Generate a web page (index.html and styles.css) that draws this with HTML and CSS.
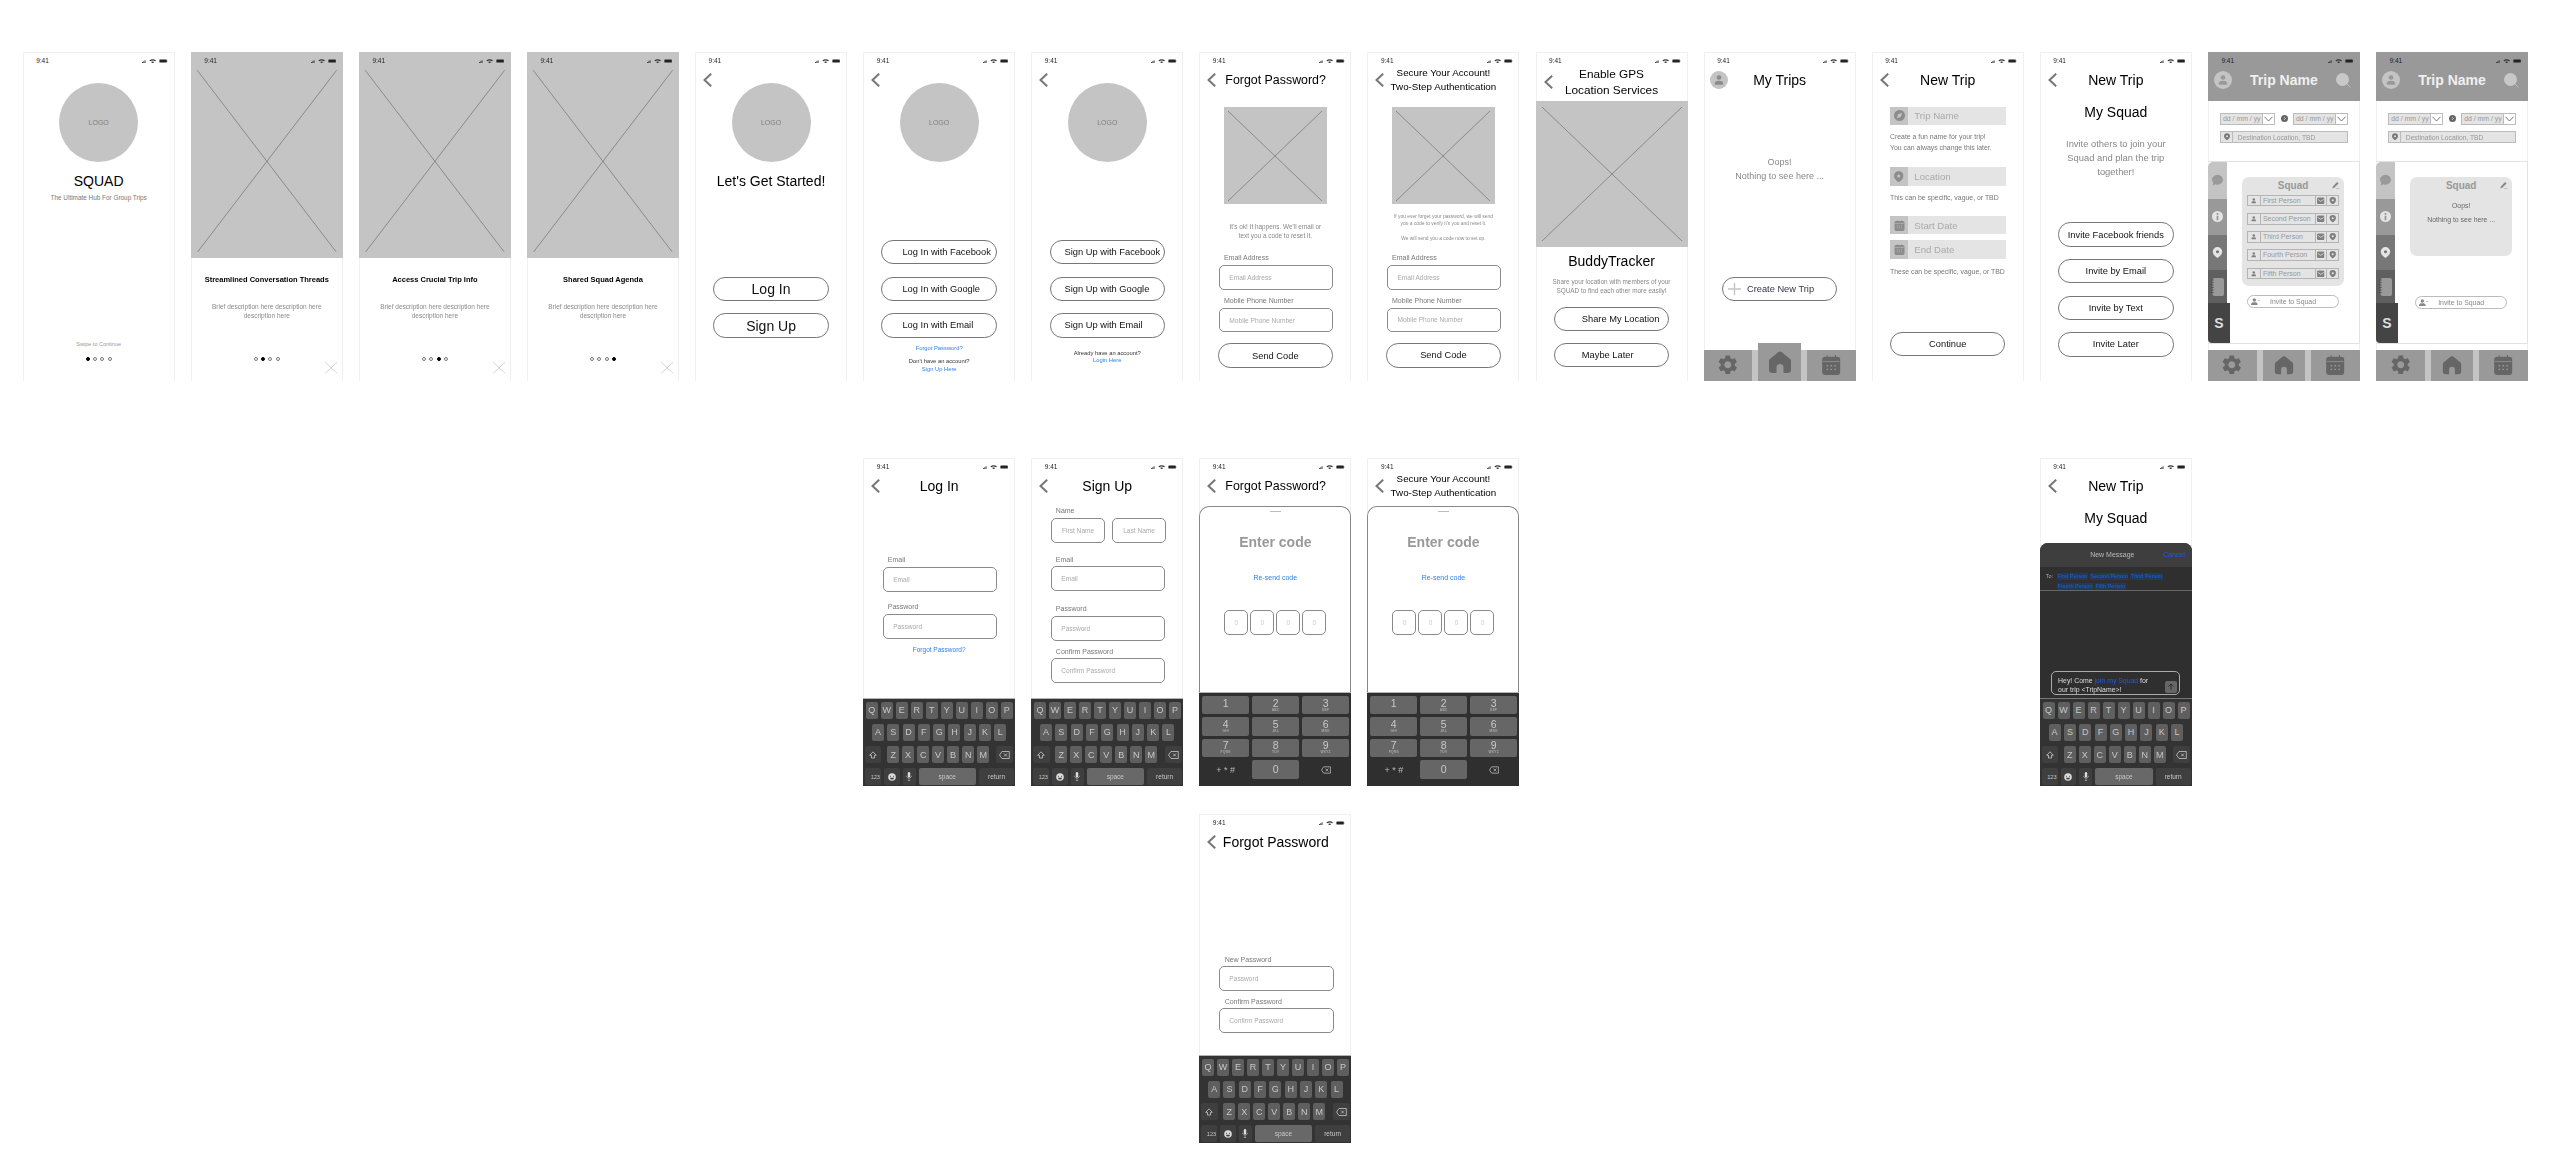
FILE: index.html
```html
<!DOCTYPE html>
<html lang="en">
<head>
    <meta charset="UTF-8">
    <title>Squad wireframes</title>
    <link rel="stylesheet" href="styles.css">
</head>
<body>
    <svg class="sprite" xmlns="http://www.w3.org/2000/svg">
        <symbol id="i-status" viewBox="0 0 25.6 4">
            <path d="M0 2.9h.9V4H0zM1.3 2.2h.9V4h-.9zM2.6 1.2h.9V4h-.9zM3.5 .4" fill="#333"/>
            <path d="M7.4 1.4C9.4-.3 12-.3 14 1.4l-.8.9c-1.500-1.200-3.500-1.200-5 0zM9 3c.9-.7 2.500-.7 3.400 0L10.700 4.200z" fill="#333"/>
            <rect x="17.400" y=".4" width="7.400" height="3.200" rx=".6" fill="#222"/>
            <rect x="25" y="1.400" width=".6" height="1.200" fill="#555"/>
        </symbol>
        <symbol id="i-back" viewBox="0 0 9 14">
            <path d="M8.200 .7 1.500 7l6.700 6.300" fill="none" stroke="#777" stroke-width="2"/>
        </symbol>
        <symbol id="i-cross" viewBox="0 0 100 100" preserveAspectRatio="none">
            <path d="M0 0 100 100M100 0 0 100" fill="none" stroke="#777" stroke-width=".75" vector-effect="non-scaling-stroke"/>
        </symbol>
        <symbol id="i-close" viewBox="0 0 12 12" preserveAspectRatio="none">
            <path d="M0 0 12 12M12 0 0 12" fill="none" stroke="#c8c8c8" stroke-width=".8"/>
        </symbol>
        <symbol id="i-person" viewBox="0 0 18 18">
            <circle cx="9" cy="5.800" r="3"/>
            <path d="M3.500 14c0-3 2.200-4 5.500-4s5.500 1 5.500 4c0 .8-.5 1-1 1H4.500c-.5 0-1-.2-1-1z"/>
        </symbol>
        <symbol id="i-gear" viewBox="2 2 20 20">
            <path d="M19.140 12.940c.04-.3.06-.61.06-.94 0-.32-.02-.64-.07-.94l2.030-1.580c.18-.14.23-.41.12-.61l-1.920-3.320c-.12-.22-.37-.29-.59-.22l-2.390.96c-.5-.38-1.030-.7-1.620-.94l-.36-2.540c-.04-.24-.24-.41-.48-.41h-3.840c-.24 0-.43.17-.47.41l-.36 2.540c-.59.24-1.130.57-1.620.94l-2.390-.96c-.22-.08-.47 0-.59.22L2.740 8.870c-.12.21-.08.47.12.61l2.030 1.580c-.05.3-.09.63-.09.94s.02.64.07.94l-2.030 1.580c-.18.14-.23.41-.12.61l1.920 3.320c.12.22.37.29.59.22l2.390-.96c.5.38 1.030.7 1.620.94l.36 2.540c.05.24.24.41.48.41h3.840c.24 0 .44-.17.47-.41l.36-2.540c.59-.24 1.130-.56 1.620-.94l2.390.96c.22.08.47 0 .59-.22l1.920-3.320c.12-.22.07-.47-.12-.61l-2.010-1.580zM12 15.600c-1.980 0-3.600-1.620-3.600-3.600s1.620-3.600 3.600-3.600 3.600 1.620 3.600 3.600-1.620 3.600-3.600 3.600z"/>
        </symbol>
        <symbol id="i-home" viewBox="0 0 24 24">
            <path d="M12 1.500c-.8 0-1.500.4-2.200 1L2.200 8.800C1.300 9.600 1 10.300 1 11.400V20c0 1.800 1.200 3 3 3h4.500v-5.500a3.500 3.500 0 0 1 7 0V23H20c1.800 0 3-1.200 3-3v-8.600c0-1.100-.3-1.800-1.200-2.600l-7.600-6.300c-.7-.6-1.400-1-2.200-1z"/>
        </symbol>
        <symbol id="i-cal" viewBox="0 0 20 22">
            <path d="M5 0h1v3H5zM14 0h1v3h-1z"/>
            <path fill-rule="evenodd" d="M3.500 2h13A3.500 3.500 0 0 1 20 5.500v13a3.500 3.500 0 0 1-3.500 3.500h-13A3.500 3.500 0 0 1 0 18.500v-13A3.500 3.500 0 0 1 3.500 2zM1 6.500v1h18v-1zM5 11h1.600v1.600H5zM9.200 11h1.600v1.600H9.200zM13.400 11H15v1.600h-1.600zM5 15h1.600v1.600H5zM9.200 15h1.600v1.600H9.200zM13.400 15H15v1.600h-1.600z"/>
        </symbol>
        <symbol id="i-compass" viewBox="0 0 12 12">
            <path fill-rule="evenodd" d="M6 0a6 6 0 1 1 0 12A6 6 0 0 1 6 0zM9 3 4.600 4.600 3 9l4.400-1.600z"/>
        </symbol>
        <symbol id="i-pin" viewBox="0 0 12 14">
            <path fill-rule="evenodd" d="M6 0a6 6 0 0 1 6 6c0 3.500-4 6.800-6 8-2-1.200-6-4.500-6-8a6 6 0 0 1 6-6zm0 4a2 2 0 1 0 0 4 2 2 0 0 0 0-4z"/>
        </symbol>
        <symbol id="i-chat" viewBox="0 0 12 12">
            <path d="M6 0c3.300 0 6 2.300 6 5.300s-2.700 5.300-6 5.300c-.9 0-1.700-.2-2.400-.5L.6 11.500l.9-3C.5 7.600 0 6.500 0 5.300 0 2.300 2.700 0 6 0z"/>
            <path d="M3.200 5h1.100v1H3.200zM5.500 5h1.100v1H5.500zM7.800 5h1.100v1H7.800z" fill="#aaa"/>
        </symbol>
        <symbol id="i-info" viewBox="0 0 12 12">
            <path fill-rule="evenodd" d="M6 0a6 6 0 1 1 0 12A6 6 0 0 1 6 0zM5 2.200v1.800h2V2.200zM5 5.200v4.800h2V5.200z"/>
        </symbol>
        <symbol id="i-notes" viewBox="0 0 13 18">
            <rect x="1.500" width="11.500" height="18" rx="2"/>
            <path d="M0 2h3M0 4.500h3M0 7h3M0 9.500h3M0 12h3M0 14.500h3" stroke="#444" stroke-width=".8" stroke-dasharray="1 .3"/>
        </symbol>
        <symbol id="i-pencil" viewBox="0 0 8 8">
            <path d="M5.800 0 7.500 1.700 2.600 6.600.3 7.400 1 5zM5 7h3v.7H5z"/>
        </symbol>
        <symbol id="i-mail" viewBox="0 0 9 8">
            <path fill-rule="evenodd" d="M1.500 0h6A1.500 1.500 0 0 1 9 1.500v5A1.500 1.500 0 0 1 7.500 8h-6A1.500 1.500 0 0 1 0 6.500v-5A1.500 1.500 0 0 1 1.500 0zM1 1.800l3.500 2.500L8 1.800v1l-3.500 2.500L1 2.800z"/>
        </symbol>
        <symbol id="i-invite" viewBox="0 0 10 8">
            <circle cx="3.700" cy="2" r="1.900"/>
            <path d="M0 7c0-1.800 1.500-2.500 3.700-2.500S7.400 5.200 7.400 7c0 .5-.3.7-.7.7H.7C.3 7.700 0 7.500 0 7zM7.800 2.400H10V3H7.800z"/>
        </symbol>
        <symbol id="i-search" viewBox="0 0 15 15">
            <circle cx="6.500" cy="6.500" r="6.500" fill="#c8c8c8"/>
            <path d="M11 11 14.500 14.500" stroke="#bbb" stroke-width="1"/>
        </symbol>
        <symbol id="i-down" viewBox="0 0 9 6">
            <path d="M.5 .8 4.500 5 8.500 .8" fill="none" stroke="#666" stroke-width=".9"/>
        </symbol>
        <symbol id="i-next" viewBox="0 0 7 7">
            <circle cx="3.500" cy="3.500" r="3.500" fill="#666"/>
            <path d="M2.900 2 4.400 3.500 2.900 5" fill="none" stroke="#ddd" stroke-width=".8"/>
        </symbol>
        <symbol id="i-plus" viewBox="0 0 13 12">
            <path d="M0 6h13M6.500 0v12" stroke="#c4c4c4" stroke-width="1.400"/>
        </symbol>
        <symbol id="i-shift" viewBox="0 0 8 8">
            <path d="M4 .8 7.300 4.300H5.500V7H2.500V4.300H.7z" fill="none" stroke="#ddd" stroke-width=".7"/>
        </symbol>
        <symbol id="i-del" viewBox="0 0 11 8">
            <path d="M3 .5h7.300v7H3L.5 4zM5 2.500l3 3M8 2.500l-3 3" fill="none" stroke="#ddd" stroke-width=".7"/>
        </symbol>
        <symbol id="i-emoji" viewBox="0 0 8 8">
            <circle cx="4" cy="4" r="3.800" fill="#ddd"/>
            <path d="M2 2.700h1v1H2zM5 2.700h1v1H5zM2 4.700h4C5.800 6 5 6.500 4 6.500S2.200 6 2 4.700z" fill="#444"/>
        </symbol>
        <symbol id="i-mic" viewBox="0 0 6 9">
            <rect x="1.800" width="2.400" height="5.400" rx="1.200" fill="#ddd"/>
            <path d="M.5 3.800c0 3 5 3 5 0M3 6.200V9M1.800 8.700h2.400" fill="none" stroke="#ddd" stroke-width=".5"/>
        </symbol>
        <symbol id="i-up" viewBox="0 0 8 8">
            <path d="M4 7V1M1.500 3.500 4 1l2.500 2.500" fill="none" stroke="#222" stroke-width=".8"/>
        </symbol>
    </svg>

    <main class="board">
        <!-- top row -->
        <section class="phone">
            <div class="status"><span>9:41</span><svg><use href="#i-status"/></svg></div>
            <div class="logo">LOGO</div>
            <h1 class="big mt-11">SQUAD</h1>
            <p class="tagline mt-5_5">The Ultimate Hub For Group Trips</p>
            <p class="swipe mt-138">Swipe to Continue</p>
            <div class="dots mt-9"><i class="on"></i><i></i><i></i><i></i></div>
        </section>

        <section class="phone">
            <div class="cover">
                <div class="status"><span>9:41</span><svg><use href="#i-status"/></svg></div>
                <svg class="cover-cross"><use href="#i-cross"/></svg>
            </div>
            <h2 class="slide-title">Streamlined Conversation Threads</h2>
            <p class="slide-text">Brief description here description here<br>description here</p>
            <div class="dots mt-37"><i></i><i class="on"></i><i></i><i></i></div>
            <svg class="skip"><use href="#i-close"/></svg>
        </section>

        <section class="phone">
            <div class="cover">
                <div class="status"><span>9:41</span><svg><use href="#i-status"/></svg></div>
                <svg class="cover-cross"><use href="#i-cross"/></svg>
            </div>
            <h2 class="slide-title">Access Crucial Trip Info</h2>
            <p class="slide-text">Brief description here description here<br>description here</p>
            <div class="dots mt-37"><i></i><i></i><i class="on"></i><i></i></div>
            <svg class="skip"><use href="#i-close"/></svg>
        </section>

        <section class="phone">
            <div class="cover">
                <div class="status"><span>9:41</span><svg><use href="#i-status"/></svg></div>
                <svg class="cover-cross"><use href="#i-cross"/></svg>
            </div>
            <h2 class="slide-title">Shared Squad Agenda</h2>
            <p class="slide-text">Brief description here description here<br>description here</p>
            <div class="dots mt-37"><i></i><i></i><i></i><i class="on"></i></div>
            <svg class="skip"><use href="#i-close"/></svg>
        </section>

        <section class="phone">
            <div class="status"><span>9:41</span><svg><use href="#i-status"/></svg></div>
            <div class="nav"><svg class="back"><use href="#i-back"/></svg></div>
            <div class="logo">LOGO</div>
            <h1 class="big mt-11">Let's Get Started!</h1>
            <div class="stack mt-88">
                <a class="btn btn-lg">Log In</a>
                <a class="btn btn-lg">Sign Up</a>
            </div>
        </section>

        <section class="phone">
            <div class="status"><span>9:41</span><svg><use href="#i-status"/></svg></div>
            <div class="nav"><svg class="back"><use href="#i-back"/></svg></div>
            <div class="logo">LOGO</div>
            <div class="stack mt-78_5">
                <a class="btn pad-20">Log In with Facebook</a>
                <a class="btn pad-20">Log In with Google</a>
                <a class="btn pad-20">Log In with Email</a>
            </div>
            <p class="link mt-7_5">Forgot Password?</p>
            <p class="small mt-6">Don't have an account?</p>
            <p class="link">Sign Up Here</p>
        </section>

        <section class="phone">
            <div class="status"><span>9:41</span><svg><use href="#i-status"/></svg></div>
            <div class="nav"><svg class="back"><use href="#i-back"/></svg></div>
            <div class="logo">LOGO</div>
            <div class="stack mt-78_5">
                <a class="btn pad-14">Sign Up with Facebook</a>
                <a class="btn pad-14">Sign Up with Google</a>
                <a class="btn pad-14">Sign Up with Email</a>
            </div>
            <p class="small mt-12">Already have an account?</p>
            <p class="link">Login Here</p>
        </section>

        <section class="phone">
            <div class="status"><span>9:41</span><svg><use href="#i-status"/></svg></div>
            <div class="nav nav-left"><svg class="back"><use href="#i-back"/></svg><h1 class="title title-sm">Forgot Password?</h1></div>
            <div class="shot mt-13"><svg><use href="#i-cross"/></svg></div>
            <p class="note mt-18">It's ok! It happens. We'll email or<br>text you a code to reset it.</p>
            <p class="label mt-14">Email Address</p>
            <div class="input mt-3">Email Address</div>
            <p class="label mt-7">Mobile Phone Number</p>
            <div class="input mt-3">Mobile Phone Number</div>
            <a class="btn btn-mid mt-11">Send Code</a>
        </section>

        <section class="phone">
            <div class="status"><span>9:41</span><svg><use href="#i-status"/></svg></div>
            <div class="nav"><svg class="back"><use href="#i-back"/></svg><h1 class="title title-two">Secure Your Account!<br>Two-Step Authentication</h1></div>
            <div class="shot mt-13"><svg><use href="#i-cross"/></svg></div>
            <p class="fine mt-9">If you ever forget your password, we will send<br>you a code to verify it's you and reset it.</p>
            <p class="fine mt-7_5">We will send you a code now to set up.</p>
            <p class="label mt-11_5">Email Address</p>
            <div class="input mt-3">Email Address</div>
            <p class="label mt-7">Mobile Phone Number</p>
            <div class="input mt-3">Mobile Phone Number</div>
            <a class="btn btn-mid mt-11">Send Code</a>
        </section>

        <section class="phone">
            <div class="status"><span>9:41</span><svg><use href="#i-status"/></svg></div>
            <div class="nav"><svg class="back"><use href="#i-back"/></svg><h1 class="title title-gps">Enable GPS<br>Location Services</h1></div>
            <div class="shot shot-wide mt-6_5"><svg><use href="#i-cross"/></svg></div>
            <h2 class="big mt-6_5">BuddyTracker</h2>
            <p class="note mt-7_5">Share your location with members of your<br>SQUAD to find each other more easily!</p>
            <div class="stack mt-12">
                <a class="btn pad-27">Share My Location</a>
                <a class="btn pad-27">Maybe Later</a>
            </div>
        </section>

        <section class="phone">
            <div class="status"><span>9:41</span><svg><use href="#i-status"/></svg></div>
            <div class="nav nav-avatar"><div class="avatar"><svg><use href="#i-person"/></svg></div><h1 class="title">My Trips</h1></div>
            <p class="empty mt-61">Oops!<br>Nothing to see here ...</p>
            <a class="btn btn-add mt-94"><svg><use href="#i-plus"/></svg>Create New Trip</a>
            <div class="tabs mt-48">
                <div class="tab tab-gear"><svg><use href="#i-gear"/></svg></div>
                <div class="tab tab-home raised"><svg><use href="#i-home"/></svg></div>
                <div class="tab tab-cal"><svg><use href="#i-cal"/></svg></div>
            </div>
        </section>

        <section class="phone">
            <div class="status"><span>9:41</span><svg><use href="#i-status"/></svg></div>
            <div class="nav"><svg class="back"><use href="#i-back"/></svg><h1 class="title">New Trip</h1></div>
            <div class="trip-field mt-12_5"><span><svg><use href="#i-compass"/></svg></span>Trip Name</div>
            <p class="hint mt-6">Create a fun name for your trip!<br>You can always change this later.</p>
            <div class="trip-field mt-14"><span><svg class="pin"><use href="#i-pin"/></svg></span>Location</div>
            <p class="hint mt-6">This can be specific, vague, or TBD</p>
            <div class="trip-field mt-13"><span><svg><use href="#i-cal"/></svg></span>Start Date</div>
            <div class="trip-field mt-6"><span><svg><use href="#i-cal"/></svg></span>End Date</div>
            <p class="hint mt-7">These can be specific, vague, or TBD</p>
            <a class="btn btn-mid mt-55">Continue</a>
        </section>

        <section class="phone">
            <div class="status"><span>9:41</span><svg><use href="#i-status"/></svg></div>
            <div class="nav"><svg class="back"><use href="#i-back"/></svg><h1 class="title">New Trip</h1></div>
            <h2 class="big mt-10">My Squad</h2>
            <p class="invite-copy mt-17">Invite others to join your<br>Squad and plan the trip<br>together!</p>
            <div class="stack mt-44">
                <a class="btn btn-mid">Invite Facebook friends</a>
                <a class="btn btn-mid">Invite by Email</a>
                <a class="btn btn-mid">Invite by Text</a>
                <a class="btn btn-mid">Invite Later</a>
            </div>
        </section>

        <section class="phone">
            <div class="trip-head">
                <div class="status"><span>9:41</span><svg><use href="#i-status"/></svg></div>
                <div class="nav nav-avatar">
                    <div class="avatar avatar-head"><svg><use href="#i-person"/></svg></div>
                    <h1 class="title title-bold">Trip Name</h1>
                    <svg class="search"><use href="#i-search"/></svg>
                </div>
            </div>
            <div class="dates">
                <div class="date"><p>dd / mm / yy</p><span><svg><use href="#i-down"/></svg></span></div>
                <svg class="next"><use href="#i-next"/></svg>
                <div class="date"><p>dd / mm / yy</p><span><svg><use href="#i-down"/></svg></span></div>
            </div>
            <div class="dest"><span><svg><use href="#i-pin"/></svg></span>Destination Location, TBD</div>
            <div class="panel">
                <div class="side">
                    <div class="side-tab s1"><svg><use href="#i-chat"/></svg></div>
                    <div class="side-tab s2"><svg><use href="#i-info"/></svg></div>
                    <div class="side-tab s3"><svg><use href="#i-pin"/></svg></div>
                    <div class="side-tab s4"><svg class="notes"><use href="#i-notes"/></svg></div>
                    <div class="side-tab s5">S</div>
                </div>
                <div class="squad">
                    <div class="card">
                        <div class="card-head"><h3>Squad</h3><svg><use href="#i-pencil"/></svg></div>
                        <div class="member"><span class="m-ico"><svg><use href="#i-person"/></svg></span><span class="m-name">First Person</span><span class="m-ico"><svg><use href="#i-mail"/></svg></span><span class="m-ico"><svg><use href="#i-pin"/></svg></span></div>
                        <div class="member"><span class="m-ico"><svg><use href="#i-person"/></svg></span><span class="m-name">Second Person</span><span class="m-ico"><svg><use href="#i-mail"/></svg></span><span class="m-ico"><svg><use href="#i-pin"/></svg></span></div>
                        <div class="member"><span class="m-ico"><svg><use href="#i-person"/></svg></span><span class="m-name">Third Person</span><span class="m-ico"><svg><use href="#i-mail"/></svg></span><span class="m-ico"><svg><use href="#i-pin"/></svg></span></div>
                        <div class="member"><span class="m-ico"><svg><use href="#i-person"/></svg></span><span class="m-name">Fourth Person</span><span class="m-ico"><svg><use href="#i-mail"/></svg></span><span class="m-ico"><svg><use href="#i-pin"/></svg></span></div>
                        <div class="member"><span class="m-ico"><svg><use href="#i-person"/></svg></span><span class="m-name">Fifth Person</span><span class="m-ico"><svg><use href="#i-mail"/></svg></span><span class="m-ico"><svg><use href="#i-pin"/></svg></span></div>
                    </div>
                    <div class="invite-pill mt-9_5"><svg><use href="#i-invite"/></svg><span>Invite to Squad</span></div>
                </div>
            </div>
            <div class="tabs mt-6">
                <div class="tab tab-gear"><svg><use href="#i-gear"/></svg></div>
                <div class="tab tab-home"><svg><use href="#i-home"/></svg></div>
                <div class="tab tab-cal"><svg><use href="#i-cal"/></svg></div>
            </div>
        </section>

        <section class="phone">
            <div class="trip-head">
                <div class="status"><span>9:41</span><svg><use href="#i-status"/></svg></div>
                <div class="nav nav-avatar">
                    <div class="avatar avatar-head"><svg><use href="#i-person"/></svg></div>
                    <h1 class="title title-bold">Trip Name</h1>
                    <svg class="search"><use href="#i-search"/></svg>
                </div>
            </div>
            <div class="dates">
                <div class="date"><p>dd / mm / yy</p><span><svg><use href="#i-down"/></svg></span></div>
                <svg class="next"><use href="#i-next"/></svg>
                <div class="date"><p>dd / mm / yy</p><span><svg><use href="#i-down"/></svg></span></div>
            </div>
            <div class="dest"><span><svg><use href="#i-pin"/></svg></span>Destination Location, TBD</div>
            <div class="panel">
                <div class="side">
                    <div class="side-tab s1"><svg><use href="#i-chat"/></svg></div>
                    <div class="side-tab s2"><svg><use href="#i-info"/></svg></div>
                    <div class="side-tab s3"><svg><use href="#i-pin"/></svg></div>
                    <div class="side-tab s4"><svg class="notes"><use href="#i-notes"/></svg></div>
                    <div class="side-tab s5">S</div>
                </div>
                <div class="squad">
                    <div class="card card-empty">
                        <div class="card-head"><h3>Squad</h3><svg><use href="#i-pencil"/></svg></div>
                        <p class="card-oops">Oops!<br>Nothing to see here ...</p>
                    </div>
                    <div class="invite-pill mt-40"><svg><use href="#i-invite"/></svg><span>Invite to Squad</span></div>
                </div>
            </div>
            <div class="tabs mt-6">
                <div class="tab tab-gear"><svg><use href="#i-gear"/></svg></div>
                <div class="tab tab-home"><svg><use href="#i-home"/></svg></div>
                <div class="tab tab-cal"><svg><use href="#i-cal"/></svg></div>
            </div>
        </section>

        <!-- second row -->
        <section class="phone short at-6">
            <div class="status"><span>9:41</span><svg><use href="#i-status"/></svg></div>
            <div class="nav"><svg class="back"><use href="#i-back"/></svg><h1 class="title">Log In</h1></div>
            <p class="label mt-56">Email</p>
            <div class="input mt-2_5 tall">Email</div>
            <p class="label mt-11">Password</p>
            <div class="input mt-3 tall">Password</div>
            <p class="link link-md mt-7_5">Forgot Password?</p>
            <div class="kb">
                <div class="kb-row"><b>Q</b><b>W</b><b>E</b><b>R</b><b>T</b><b>Y</b><b>U</b><b>I</b><b>O</b><b>P</b></div>
                <div class="kb-row kb-mid"><b>A</b><b>S</b><b>D</b><b>F</b><b>G</b><b>H</b><b>J</b><b>K</b><b>L</b></div>
                <div class="kb-row kb-shift"><b class="dark wide"><svg class="k-shift"><use href="#i-shift"/></svg></b><b>Z</b><b>X</b><b>C</b><b>V</b><b>B</b><b>N</b><b>M</b><b class="dark wide del"><svg class="k-del"><use href="#i-del"/></svg></b></div>
                <div class="kb-row kb-bottom"><b class="dark k123">123</b><b class="dark k-e"><svg><use href="#i-emoji"/></svg></b><b class="dark k-m"><svg><use href="#i-mic"/></svg></b><b class="space">space</b><b class="dark ret">return</b></div>
            </div>
        </section>

        <section class="phone short at-7">
            <div class="status"><span>9:41</span><svg><use href="#i-status"/></svg></div>
            <div class="nav"><svg class="back"><use href="#i-back"/></svg><h1 class="title">Sign Up</h1></div>
            <p class="label mt-7">Name</p>
            <div class="names mt-2_5">
                <div class="input tall">First Name</div>
                <div class="input tall">Last Name</div>
            </div>
            <p class="label mt-13">Email</p>
            <div class="input mt-2_5 tall">Email</div>
            <p class="label mt-14">Password</p>
            <div class="input mt-3 tall">Password</div>
            <p class="label mt-7">Confirm Password</p>
            <div class="input mt-2 tall">Confirm Password</div>
            <div class="kb">
                <div class="kb-row"><b>Q</b><b>W</b><b>E</b><b>R</b><b>T</b><b>Y</b><b>U</b><b>I</b><b>O</b><b>P</b></div>
                <div class="kb-row kb-mid"><b>A</b><b>S</b><b>D</b><b>F</b><b>G</b><b>H</b><b>J</b><b>K</b><b>L</b></div>
                <div class="kb-row kb-shift"><b class="dark wide"><svg class="k-shift"><use href="#i-shift"/></svg></b><b>Z</b><b>X</b><b>C</b><b>V</b><b>B</b><b>N</b><b>M</b><b class="dark wide del"><svg class="k-del"><use href="#i-del"/></svg></b></div>
                <div class="kb-row kb-bottom"><b class="dark k123">123</b><b class="dark k-e"><svg><use href="#i-emoji"/></svg></b><b class="dark k-m"><svg><use href="#i-mic"/></svg></b><b class="space">space</b><b class="dark ret">return</b></div>
            </div>
        </section>

        <section class="phone short at-8">
            <div class="status"><span>9:41</span><svg><use href="#i-status"/></svg></div>
            <div class="nav nav-left"><svg class="back"><use href="#i-back"/></svg><h1 class="title title-sm">Forgot Password?</h1></div>
            <div class="sheet">
                <i class="handle"></i>
                <h2 class="enter">Enter code</h2>
                <p class="link link-lg">Re-send code</p>
                <div class="code"><span>0</span><span>0</span><span>0</span><span>0</span></div>
            </div>
            <div class="numpad">
                <b>1</b><b>2<small>ABC</small></b><b>3<small>DEF</small></b>
                <b>4<small>GHI</small></b><b>5<small>JKL</small></b><b>6<small>MNO</small></b>
                <b>7<small>PQRS</small></b><b>8<small>TUV</small></b><b>9<small>WXYZ</small></b>
                <em>+ * #</em><b class="zero">0</b><em><svg><use href="#i-del"/></svg></em>
            </div>
        </section>

        <section class="phone short at-9">
            <div class="status"><span>9:41</span><svg><use href="#i-status"/></svg></div>
            <div class="nav"><svg class="back"><use href="#i-back"/></svg><h1 class="title title-two">Secure Your Account!<br>Two-Step Authentication</h1></div>
            <div class="sheet">
                <i class="handle"></i>
                <h2 class="enter">Enter code</h2>
                <p class="link link-lg">Re-send code</p>
                <div class="code"><span>0</span><span>0</span><span>0</span><span>0</span></div>
            </div>
            <div class="numpad">
                <b>1</b><b>2<small>ABC</small></b><b>3<small>DEF</small></b>
                <b>4<small>GHI</small></b><b>5<small>JKL</small></b><b>6<small>MNO</small></b>
                <b>7<small>PQRS</small></b><b>8<small>TUV</small></b><b>9<small>WXYZ</small></b>
                <em>+ * #</em><b class="zero">0</b><em><svg><use href="#i-del"/></svg></em>
            </div>
        </section>

        <section class="phone short at-13">
            <div class="status"><span>9:41</span><svg><use href="#i-status"/></svg></div>
            <div class="nav"><svg class="back"><use href="#i-back"/></svg><h1 class="title">New Trip</h1></div>
            <h2 class="big mt-10">My Squad</h2>
            <div class="compose">
                <div class="compose-head"><span>New Message</span><a>Cancel</a></div>
                <div class="to">
                    <span class="to-label">To:</span>
                    <div class="chips"><span>First Person</span><span>Second Person</span><span>Third Person</span><span>Fourth Person</span><span>Fifth Person</span></div>
                </div>
                <div class="bubble">
                    <p>Hey! Come <a>join my Squad</a> for<br>our trip &lt;TripName&gt;!</p>
                    <span class="bubble-send"><svg><use href="#i-up"/></svg></span>
                </div>
            </div>
            <div class="kb kb-flat">
                <div class="kb-row"><b>Q</b><b>W</b><b>E</b><b>R</b><b>T</b><b>Y</b><b>U</b><b>I</b><b>O</b><b>P</b></div>
                <div class="kb-row kb-mid"><b>A</b><b>S</b><b>D</b><b>F</b><b>G</b><b>H</b><b>J</b><b>K</b><b>L</b></div>
                <div class="kb-row kb-shift"><b class="dark wide"><svg class="k-shift"><use href="#i-shift"/></svg></b><b>Z</b><b>X</b><b>C</b><b>V</b><b>B</b><b>N</b><b>M</b><b class="dark wide del"><svg class="k-del"><use href="#i-del"/></svg></b></div>
                <div class="kb-row kb-bottom"><b class="dark k123">123</b><b class="dark k-e"><svg><use href="#i-emoji"/></svg></b><b class="dark k-m"><svg><use href="#i-mic"/></svg></b><b class="space">space</b><b class="dark ret">return</b></div>
            </div>
        </section>

        <!-- third row -->
        <section class="phone at-8b">
            <div class="status"><span>9:41</span><svg><use href="#i-status"/></svg></div>
            <div class="nav nav-left nav-tight"><svg class="back"><use href="#i-back"/></svg><h1 class="title">Forgot Password</h1></div>
            <p class="label label-wide mt-99_5">New Password</p>
            <div class="input mt-2_5 input-wide">Password</div>
            <p class="label label-wide mt-7">Confirm Password</p>
            <div class="input mt-1_5 input-wide">Confirm Password</div>
            <div class="kb">
                <div class="kb-row"><b>Q</b><b>W</b><b>E</b><b>R</b><b>T</b><b>Y</b><b>U</b><b>I</b><b>O</b><b>P</b></div>
                <div class="kb-row kb-mid"><b>A</b><b>S</b><b>D</b><b>F</b><b>G</b><b>H</b><b>J</b><b>K</b><b>L</b></div>
                <div class="kb-row kb-shift"><b class="dark wide"><svg class="k-shift"><use href="#i-shift"/></svg></b><b>Z</b><b>X</b><b>C</b><b>V</b><b>B</b><b>N</b><b>M</b><b class="dark wide del"><svg class="k-del"><use href="#i-del"/></svg></b></div>
                <div class="kb-row kb-bottom"><b class="dark k123">123</b><b class="dark k-e"><svg><use href="#i-emoji"/></svg></b><b class="dark k-m"><svg><use href="#i-mic"/></svg></b><b class="space">space</b><b class="dark ret">return</b></div>
            </div>
        </section>
    </main>
</body>
</html>
```
FILE: styles.css
```css
* {
    box-sizing: border-box;
}

body {
    margin: 0;
    background-color: #fff;
    font-family: "Liberation Sans", Arial, sans-serif;
    color: #000;
}

h1, h2, h3, p {
    margin: 0;
    font-weight: normal;
}

.sprite {
    display: none;
}

svg {
    display: block;
}

/* the source is a soft export, so everything is slightly out of focus */
.board {
    display: grid;
    grid-template-columns: repeat(15, 168.1px);
    grid-template-rows: 406px 356px 329px;
    padding: 52px 0 0 22.7px;
    filter: blur(.4px);
}

.phone {
    display: flex;
    flex-direction: column;
    width: 152px;
    height: 329px;
    overflow: hidden;
    background-color: #fff;
    box-shadow: inset 0 1px 0 #f0f0f0, inset 1px 0 0 #f0f0f0, inset -1px 0 0 #f0f0f0;
}

.short {
    height: 328px;
}

.at-6 { grid-column: 6; grid-row: 2; }
.at-7 { grid-column: 7; grid-row: 2; }
.at-8 { grid-column: 8; grid-row: 2; }
.at-9 { grid-column: 9; grid-row: 2; }
.at-13 { grid-column: 13; grid-row: 2; }
.at-8b { grid-column: 8; grid-row: 3; }

/* spacing */
.mt-1_5 { margin-top: 1.5px; }
.mt-2 { margin-top: 2px; }
.mt-2_5 { margin-top: 2.5px; }
.mt-3 { margin-top: 3px; }
.mt-5_5 { margin-top: 5.5px; }
.mt-6 { margin-top: 6px; }
.mt-6_5 { margin-top: 6.5px; }
.mt-7 { margin-top: 7px; }
.mt-7_5 { margin-top: 7.5px; }
.mt-9 { margin-top: 9px; }
.mt-9_5 { margin-top: 9.5px; }
.mt-10 { margin-top: 10px; }
.mt-11 { margin-top: 11px; }
.mt-11_5 { margin-top: 11.5px; }
.mt-12 { margin-top: 12px; }
.mt-12_5 { margin-top: 12.5px; }
.mt-13 { margin-top: 13px; }
.mt-14 { margin-top: 14px; }
.mt-17 { margin-top: 17px; }
.mt-18 { margin-top: 18px; }
.mt-37 { margin-top: 37px; }
.mt-40 { margin-top: 40px; }
.mt-44 { margin-top: 44px; }
.mt-48 { margin-top: 48.3px; }
.mt-55 { margin-top: 55px; }
.mt-56 { margin-top: 56px; }
.mt-61 { margin-top: 61px; }
.mt-78_5 { margin-top: 78.5px; }
.mt-88 { margin-top: 88.3px; }
.mt-94 { margin-top: 94px; }
.mt-99_5 { margin-top: 99.5px; }
.mt-138 { margin-top: 138px; }

/* status bar and nav */
.status {
    display: flex;
    flex: none;
    justify-content: space-between;
    align-items: center;
    height: 14px;
    padding: 4px 6.7px 0 13.5px;
    font-size: 6.5px;
    line-height: 10px;
    color: #222;
}

.status svg {
    width: 25.6px;
    height: 4px;
}

.nav {
    display: grid;
    flex: none;
    grid-template-columns: 1fr auto 1fr;
    align-items: center;
    height: 28px;
    padding: 0 8px;
}

.nav-left {
    display: flex;
    gap: 9px;
}

.nav-tight {
    gap: 6.5px;
}

.nav-avatar {
    padding: 0 6px;
}

.back {
    width: 9px;
    height: 14px;
}

.title {
    font-size: 14px;
    line-height: 16px;
    text-align: center;
    white-space: nowrap;
}

.title-sm {
    font-size: 12.4px;
}

.title-two {
    font-size: 9.8px;
    line-height: 14px;
}

.title-gps {
    font-size: 11.8px;
    line-height: 16.4px;
}

.title-bold {
    font-weight: bold;
    color: #f0f0f0;
}

.avatar {
    display: flex;
    justify-content: center;
    align-items: center;
    width: 18.3px;
    height: 18.3px;
    border-radius: 50%;
    background-color: #c4c4c4;
    fill: #8c8c8c;
}

.avatar svg {
    width: 14px;
    height: 14px;
}

.search {
    justify-self: end;
    width: 15px;
    height: 15px;
    margin-right: 3.3px;
}

/* shared text */
.logo {
    display: flex;
    flex: none;
    justify-content: center;
    align-items: center;
    width: 79px;
    height: 79px;
    margin: 16.5px auto 0;
    border-radius: 50%;
    background-color: #c4c4c4;
    font-size: 7px;
    color: #808080;
}

.nav + .logo {
    margin-top: -11.5px;
}

.big {
    font-size: 14px;
    line-height: 16px;
    text-align: center;
}

.tagline {
    font-size: 6.4px;
    line-height: 8px;
    text-align: center;
    color: #777;
}

.swipe {
    font-size: 5.5px;
    line-height: 8px;
    text-align: center;
    color: #999;
}

.dots {
    display: flex;
    flex: none;
    justify-content: center;
    gap: 3.3px;
}

.dots i {
    width: 4px;
    height: 4px;
    border: .5px solid #777;
    border-radius: 50%;
}

.dots .on {
    background-color: #000;
    border-color: #000;
}

.link {
    font-size: 5.8px;
    line-height: 7.3px;
    text-align: center;
    color: #2f80ed;
}

.link-md {
    font-size: 6.5px;
    line-height: 8px;
}

.link-lg {
    margin-top: 24px;
    font-size: 7px;
    line-height: 8px;
}

.small {
    font-size: 5.8px;
    line-height: 7.3px;
    text-align: center;
    color: #333;
}

.note {
    font-size: 6.4px;
    line-height: 9px;
    text-align: center;
    color: #888;
}

.fine {
    font-size: 4.9px;
    line-height: 7.3px;
    text-align: center;
    color: #888;
}

.label {
    padding-left: 24.6px;
    font-size: 7px;
    line-height: 8px;
    color: #777;
}

.label-wide {
    padding-left: 25.3px;
}

.input {
    display: flex;
    flex: none;
    align-items: center;
    width: 113.5px;
    height: 24.7px;
    margin-left: 20px;
    padding-left: 9px;
    border: 1px solid #8a8a8a;
    border-radius: 5px;
    font-size: 6.6px;
    color: #aaa;
}

.tall {
    height: 25px;
}

.input-wide {
    width: 114.3px;
    height: 25.4px;
}

.names {
    display: flex;
    gap: 7.3px;
    margin-left: 20px;
}

.names .input {
    justify-content: center;
    width: 53.7px;
    margin-left: 0;
    padding-left: 0;
}

/* onboarding */
.cover {
    flex: none;
    height: 206.4px;
    background-color: #c4c4c4;
}

.cover-cross {
    width: 139.8px;
    height: 182.7px;
    margin: 3.7px 0 0 6.2px;
}

.slide-title {
    margin-top: 16.8px;
    font-size: 7.5px;
    font-weight: bold;
    line-height: 9px;
    text-align: center;
}

.slide-text {
    margin-top: 17.7px;
    font-size: 6.5px;
    line-height: 9px;
    text-align: center;
    color: #888;
}

.skip {
    flex: none;
    align-self: flex-end;
    width: 12.4px;
    height: 11.6px;
    margin: 1.4px 5.6px 0 0;
}

/* buttons */
.stack {
    display: flex;
    flex-direction: column;
    gap: 12.2px;
}

.btn {
    display: flex;
    flex: none;
    align-items: center;
    width: 115.4px;
    height: 24.4px;
    margin-left: 18.3px;
    border: 1px solid #777;
    border-radius: 12.2px;
    font-size: 9.3px;
    color: #111;
}

.btn-lg {
    justify-content: center;
    font-size: 14px;
}

.btn-mid {
    justify-content: center;
}

.pad-14 { padding-left: 14px; }
.pad-20 { padding-left: 20px; }
.pad-27 { padding-left: 27px; }

.btn-add {
    color: #3a3248;
}

.btn-add svg {
    width: 13px;
    height: 12px;
    margin: 0 6px 0 5px;
}

/* images with a cross */
.shot {
    flex: none;
    width: 103px;
    height: 97px;
    margin-left: 24.5px;
    padding: 3.5px 4.5px;
    background-color: #c4c4c4;
}

.shot svg {
    width: 100%;
    height: 100%;
}

.shot-wide {
    width: 152px;
    height: 146px;
    margin-left: 0;
    padding: 6px;
}

/* my trips */
.empty {
    font-size: 9px;
    line-height: 14px;
    text-align: center;
    color: #888;
}

.tabs {
    display: flex;
    flex: none;
    gap: 6.2px;
    height: 31px;
    background-color: #c4c4c4;
    fill: #666;
}

.tab {
    display: flex;
    justify-content: center;
    align-items: center;
    height: 31px;
    background-color: #999;
}

.tab-gear { width: 48.6px; }
.tab-home { width: 42.4px; }
.tab-cal { width: 48.6px; }

.tab-gear svg {
    width: 19.500px;
    height: 19.500px;
}

.tab-home svg {
    width: 20px;
    height: 20px;
}

.tab-cal svg {
    width: 18.500px;
    height: 20px;
}

.raised {
    height: 37.3px;
    margin-top: -6.3px;
}

.raised svg {
    width: 24px;
    height: 24px;
}

/* new trip */
.trip-field {
    display: flex;
    flex: none;
    align-items: center;
    gap: 6px;
    width: 115.7px;
    height: 18.3px;
    margin-left: 18.3px;
    background-color: #e4e4e4;
    font-size: 9.6px;
    color: #aaa;
    fill: #8c8c8c;
}

.trip-field span {
    display: flex;
    justify-content: center;
    align-items: center;
    width: 18.3px;
    height: 18.3px;
    background-color: #c4c4c4;
}

.trip-field svg {
    width: 11px;
    height: 11px;
}

.trip-field .pin {
    width: 9.500px;
    height: 11.500px;
}

.hint {
    margin-left: 18.3px;
    font-size: 6.9px;
    line-height: 11.3px;
    color: #777;
}

.invite-copy {
    font-size: 9.4px;
    line-height: 13.8px;
    text-align: center;
    color: #888;
}

/* trip name */
.trip-head {
    flex: none;
    height: 48.7px;
    background-color: #999;
}

.avatar-head {
    fill: #999;
}

.dates {
    display: flex;
    flex: none;
    justify-content: space-between;
    align-items: center;
    margin-top: 12px;
    padding: 0 12px 0 12.3px;
}

.date {
    display: flex;
    align-items: center;
    width: 54.7px;
    height: 12.3px;
    border: 1px solid #bbb;
    background-color: #e4e4e4;
    font-size: 6.9px;
    white-space: nowrap;
    color: #999;
}

.date p {
    flex: 1;
    text-align: center;
}

.date span {
    display: flex;
    flex: none;
    justify-content: center;
    align-items: center;
    width: 11.5px;
    height: 100%;
    border-left: 1px solid #bbb;
    background-color: #fff;
}

.date svg {
    width: 9px;
    height: 6px;
}

.next {
    width: 7px;
    height: 7px;
}

.dest {
    display: flex;
    flex: none;
    align-items: center;
    gap: 4.500px;
    width: 127.7px;
    height: 12.4px;
    margin: 6px 0 0 12.3px;
    border: 1px solid #bbb;
    background-color: #e4e4e4;
    font-size: 6.7px;
    color: #999;
    fill: #777;
}

.dest span {
    display: flex;
    justify-content: center;
    align-items: center;
    width: 12px;
    height: 100%;
    border-right: 1px solid #bbb;
}

.dest svg {
    width: 6px;
    height: 7.500px;
}

.panel {
    display: flex;
    flex: none;
    height: 182.7px;
    margin-top: 17.6px;
    border: 1px solid #e2e2e2;
    border-left: none;
}

.side {
    display: flex;
    flex: none;
    flex-direction: column;
    width: 22px;
}

.side-tab {
    display: flex;
    justify-content: center;
    align-items: center;
    flex: none;
    width: 18.7px;
}

.side-tab svg {
    width: 11px;
    height: 11px;
}

.s1 {
    height: 36.7px;
    border-top-left-radius: 5px;
    background-color: #c4c4c4;
    fill: #999;
}

.s2 {
    height: 36px;
    background-color: #999;
    fill: #e4e4e4;
}

.s3 {
    height: 35.7px;
    background-color: #777;
    fill: #e4e4e4;
}

.s4 {
    height: 32.6px;
    background-color: #5f5f5f;
    fill: #999;
}

.side-tab .notes {
    width: 13px;
    height: 18px;
}

.s5 {
    width: 22px;
    height: 39.7px;
    border-bottom-left-radius: 4px;
    background-color: #444;
    font-size: 14px;
    font-weight: bold;
    color: #ddd;
}

.squad {
    display: flex;
    flex-direction: column;
    margin: 14.7px 0 0 12px;
}

.card {
    display: flex;
    flex-direction: column;
    gap: 6.6px;
    width: 102.4px;
    height: 109px;
    padding: 0 5.3px;
    border-radius: 7px;
    background-color: #e4e4e4;
}

.card-empty {
    height: 79.3px;
    gap: 0;
}

.card-head {
    display: grid;
    grid-template-columns: 1fr auto 1fr;
    align-items: center;
    height: 11.700px;
    margin-top: 2.900px;
    margin-bottom: -3px;
    fill: #888;
}

.card-head h3 {
    grid-column: 2;
    font-size: 10px;
    font-weight: bold;
    color: #999;
}

.card-head svg {
    justify-self: end;
    width: 7px;
    height: 7px;
}

.member {
    display: flex;
    flex: none;
    height: 11.6px;
    border: 1px solid #b4b4b4;
    fill: #808080;
}

.m-ico {
    display: flex;
    flex: none;
    justify-content: center;
    align-items: center;
    width: 11.7px;
    border-left: 1px solid #b4b4b4;
}

.m-ico:first-child {
    border-left: none;
}

.m-ico svg {
    width: 7.500px;
    height: 7.500px;
}

.m-name {
    flex: 1;
    padding-left: 2px;
    border-left: 1px solid #b4b4b4;
    font-size: 7px;
    line-height: 10px;
    color: #999;
}

.card-oops {
    margin-top: 10.9px;
    font-size: 6.9px;
    line-height: 13.6px;
    text-align: center;
    color: #666;
}

.invite-pill {
    display: grid;
    grid-template-columns: 1fr auto 1fr;
    align-items: center;
    width: 91.7px;
    height: 12.7px;
    margin-left: 5.3px;
    border: 1px solid #bbb;
    border-radius: 6.4px;
    font-size: 6.9px;
    color: #888;
    fill: #888;
}

.invite-pill svg {
    width: 9px;
    height: 7.500px;
    margin-left: 2.500px;
}

/* keyboards */
.kb {
    display: flex;
    flex: none;
    flex-direction: column;
    gap: 5.4px;
    height: 88px;
    margin-top: auto;
    padding-top: 3px;
    border-top: 1px solid #b4b4b4;
    background-color: #333;
}

.kb-flat {
    margin-top: 0;
    border-top-color: #777;
}

.kb-row {
    display: flex;
    gap: 3px;
    height: 16.7px;
    padding-left: 2.7px;
}

.kb-mid {
    justify-content: center;
    gap: 3.3px;
    padding-left: 0;
}

.kb-shift,
.kb-bottom {
    padding-left: 1.7px;
}

.kb-row b {
    display: flex;
    flex: none;
    justify-content: center;
    align-items: center;
    width: 12px;
    border-radius: 2px;
    background-color: #5f5f5f;
    font-size: 9px;
    font-weight: normal;
    color: #c8c8c8;
}

.kb-row .dark {
    background-color: #3f3f3f;
}

.kb-row .wide {
    width: 16.6px;
    margin-right: 2.7px;
}

.kb-row .del {
    width: 17px;
    margin-right: 0;
    margin-left: 4.3px;
}

.k-shift {
    width: 8px;
    height: 8px;
}

.k-del {
    width: 11px;
    height: 8px;
}

.kb-row .k123 {
    justify-content: flex-end;
    width: 16px;
    padding-right: 1px;
    font-size: 5.5px;
}

.kb-row .k-e {
    width: 15.7px;
}

.k-e svg {
    width: 8px;
    height: 8px;
}

.kb-row .k-m {
    width: 13px;
}

.k-m svg {
    width: 6px;
    height: 9px;
}

.kb-row .space {
    width: 57.4px;
    background-color: #686868;
    font-size: 6.5px;
}

.kb-row .ret {
    width: 35.2px;
    font-size: 6.5px;
}

/* code entry */
.sheet {
    display: flex;
    flex: 1;
    flex-direction: column;
    align-items: center;
    margin-top: 6.3px;
    border: 1px solid #888;
    border-bottom: none;
    border-radius: 10px 10px 0 0;
}

.handle {
    width: 11px;
    height: 1px;
    margin-top: 4.200px;
    background-color: #bbb;
}

.enter {
    margin-top: 21.7px;
    font-size: 14px;
    font-weight: bold;
    line-height: 16px;
    color: #999;
}

.code {
    display: flex;
    gap: 2px;
    margin-top: 28px;
}

.code span {
    display: flex;
    justify-content: center;
    align-items: center;
    width: 24px;
    height: 25.3px;
    border: 1px solid #8a8a8a;
    border-radius: 5px;
    font-size: 6.5px;
    color: #ccc;
}

.numpad {
    display: grid;
    flex: none;
    grid-template-columns: repeat(3, 47.3px);
    grid-auto-rows: 18.4px;
    gap: 3.1px 2.7px;
    height: 93.7px;
    padding: 2.700px 0 0 2.700px;
    border-top: 1px solid #b4b4b4;
    background-color: #2f2f2f;
}

.numpad b {
    display: flex;
    flex-direction: column;
    align-items: center;
    padding-top: 1.500px;
    border-radius: 2px;
    background-color: #666;
    font-size: 10.500px;
    font-weight: normal;
    line-height: 11px;
    color: #c8c8c8;
}

.numpad small {
    font-size: 3.200px;
    font-weight: bold;
    line-height: 3.500px;
    letter-spacing: .3px;
    color: #aaa;
}

.numpad em {
    display: flex;
    justify-content: center;
    align-items: center;
    font-size: 9px;
    font-style: normal;
    color: #bbb;
}

.numpad em svg {
    width: 10px;
    height: 8px;
}

.numpad .zero {
    justify-content: center;
    padding-top: 0;
}

/* compose sheet */
.compose {
    display: flex;
    flex: 1;
    flex-direction: column;
    margin-top: 16.7px;
    border-radius: 8px 8px 0 0;
    background-color: #2f2f2f;
}

.compose-head {
    display: grid;
    grid-template-columns: 1fr auto 1fr;
    align-items: center;
    height: 24.6px;
    padding-right: 7px;
    border-radius: 8px 8px 0 0;
    background-color: #3e3e3e;
    font-size: 7px;
    color: #bbb;
}

.compose-head span {
    grid-column: 2;
}

.compose-head a {
    justify-self: end;
    color: #1f5fd0;
}

.to {
    display: flex;
    height: 24px;
    padding: 5.500px 0 0 6px;
    border-bottom: 1px solid #666;
}

.to-label {
    width: 11.3px;
    font-size: 5.5px;
    line-height: 6.5px;
    color: #aaa;
}

.chips {
    display: flex;
    flex-wrap: wrap;
    gap: 2.500px 2px;
    width: 115px;
}

.chips span {
    padding: 0 .5px;
    background-color: #22395c;
    font-size: 5.500px;
    line-height: 6.500px;
    color: #1f5fd0;
}

.bubble {
    display: flex;
    justify-content: space-between;
    width: 128.4px;
    height: 24px;
    margin: 79.500px 0 0 11.3px;
    padding: 4px 2px 0 6px;
    border: 1px solid #aaa;
    border-radius: 5px;
    font-size: 6.9px;
    line-height: 9px;
    color: #ddd;
}

.bubble a {
    color: #1f5fd0;
}

.bubble-send {
    display: flex;
    justify-content: center;
    align-items: center;
    flex: none;
    align-self: flex-end;
    width: 11.6px;
    height: 12px;
    margin-bottom: .5px;
    border-radius: 2px;
    background-color: #666;
}

.bubble-send svg {
    width: 8px;
    height: 8px;
}
```
